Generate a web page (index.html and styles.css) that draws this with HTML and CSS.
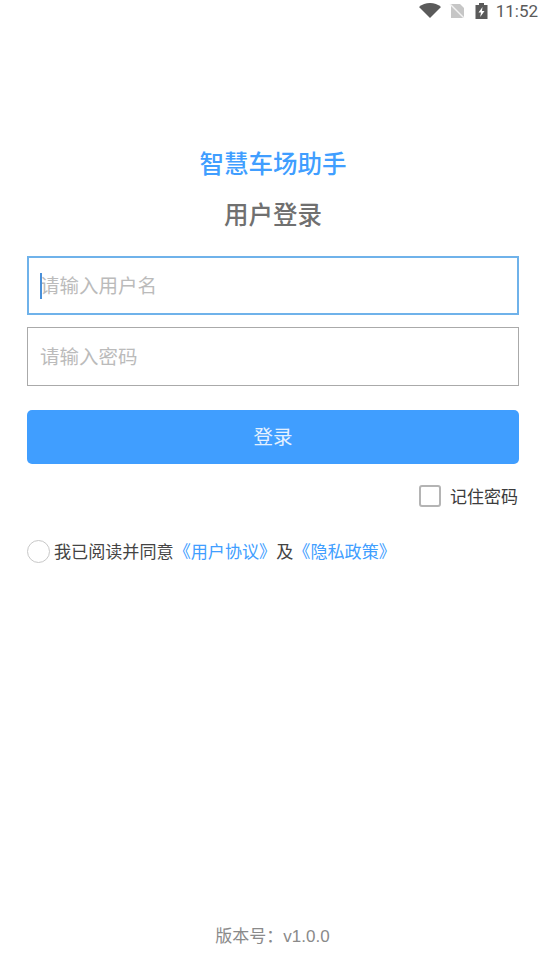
FILE: index.html
```html
<!DOCTYPE html>
<html lang="zh-CN">
    <head>
        <meta charset="UTF-8" />
        <title>智慧车场助手</title>
        <link rel="stylesheet" href="styles.css">
    </head>
    <body>
        <div class="status-bar">
            <svg class="icon-wifi" viewBox="0 0 22 15">
                <path d="M0 4 C6 -1.2 16 -1.2 22 4 L11 15 Z" fill="#5a5a5a" />
            </svg>
            <svg class="icon-sim" viewBox="0 0 16 14">
                <path d="M2 0 H11 L15 4 V14 H2 Z" fill="#c6c6c6" />
                <path d="M1 0 L15 14" stroke="#f2f2f2" stroke-width="1.4" />
            </svg>
            <svg class="icon-battery" viewBox="0 0 13 16">
                <path d="M4 0 H9 V2 H12.5 V16 H0.5 V2 H4 Z" fill="#5a5a5a" />
                <path d="M7.5 4 L3.5 9.5 H6 L5.2 14 L9.5 8 H7 Z" fill="#fff" />
            </svg>
            <span class="clock">11:52</span>
        </div>

        <div class="login">
            <h1 class="app-title">智慧车场助手</h1>
            <h2 class="login-title">用户登录</h2>

            <div class="field field-active">
                <span class="caret"></span>
                <span class="placeholder">请输入用户名</span>
            </div>
            <div class="field">
                <span class="placeholder">请输入密码</span>
            </div>

            <button class="submit">登录</button>

            <div class="remember">
                <span class="checkbox"></span>
                <span>记住密码</span>
            </div>

            <div class="agreement">
                <span class="radio"></span>
                <span>我已阅读并同意<a class="link">《用户协议》</a>及<a class="link">《隐私政策》</a></span>
            </div>
        </div>

        <div class="version">版本号：v1.0.0</div>
    </body>
</html>
```

FILE: styles.css
```css
* {
    box-sizing: border-box;
}

body {
    display: flex;
    flex-direction: column;
    width: 545px;
    height: 963px;
    margin: 0;
    overflow: hidden;
    background-color: #fff;
    font-family: "Liberation Sans", "Noto Sans CJK SC", sans-serif;
}

.status-bar {
    display: flex;
    justify-content: flex-end;
    align-items: center;
    height: 24px;
    padding: 0 7px 3px 0;
}

.icon-wifi {
    width: 22px;
    height: 15px;
    margin-right: 8px;
}

.icon-sim {
    width: 16px;
    height: 14px;
    margin-right: 10px;
}

.icon-battery {
    width: 13px;
    height: 16px;
    margin-right: 8px;
}

.clock {
    font-family: Roboto, sans-serif;
    font-size: 17px;
    color: #5a5a5a;
}

.login {
    flex: 1;
    padding: 125px 26px 0 27px;
}

.app-title {
    margin: 0;
    font-size: 24.5px;
    line-height: 32px;
    font-weight: 500;
    color: #409eff;
    text-align: center;
}

.login-title {
    margin: 19px 0 24px;
    font-size: 24.5px;
    line-height: 32px;
    font-weight: 500;
    color: #707070;
    text-align: center;
}

.field {
    display: flex;
    align-items: center;
    position: relative;
    height: 59px;
    margin-bottom: 12px;
    padding: 0 0 2px 12px;
    border: 1px solid #aaa;
    font-size: 19.5px;
}

.field-active {
    border: 2px solid #6fb2ea;
    padding-left: 11px;
}

.caret {
    position: absolute;
    left: 11px;
    top: 15px;
    width: 2px;
    height: 26px;
    background-color: #4a90d9;
}

.placeholder {
    color: #bbb;
}

.submit {
    display: block;
    width: 100%;
    height: 54px;
    margin-top: 24px;
    padding-bottom: 5px;
    border: none;
    border-radius: 5px;
    background-color: #409eff;
    color: #e4f1ff;
    font-family: inherit;
    font-size: 19.5px;
}

.remember {
    display: flex;
    justify-content: flex-end;
    align-items: center;
    gap: 9px;
    height: 22px;
    margin-top: 21px;
    padding-right: 1px;
    font-size: 17px;
    color: #3c3c3c;
}

.remember span:last-child {
    margin-top: -2px;
}

.checkbox {
    width: 22px;
    height: 22px;
    border: 2px solid #b4b4b4;
    border-radius: 3px;
}

.agreement {
    display: flex;
    align-items: center;
    gap: 4px;
    height: 23px;
    margin-top: 33px;
    font-size: 17.1px;
    color: #444;
}

.agreement span:last-child {
    margin-top: -2px;
}

.radio {
    flex-shrink: 0;
    width: 23px;
    height: 23px;
    border: 1px solid #c8c8c8;
    border-radius: 50%;
}

.link {
    color: #409eff;
}

.version {
    height: 41px;
    font-size: 17px;
    color: #8a8a8a;
    text-align: center;
}
```
